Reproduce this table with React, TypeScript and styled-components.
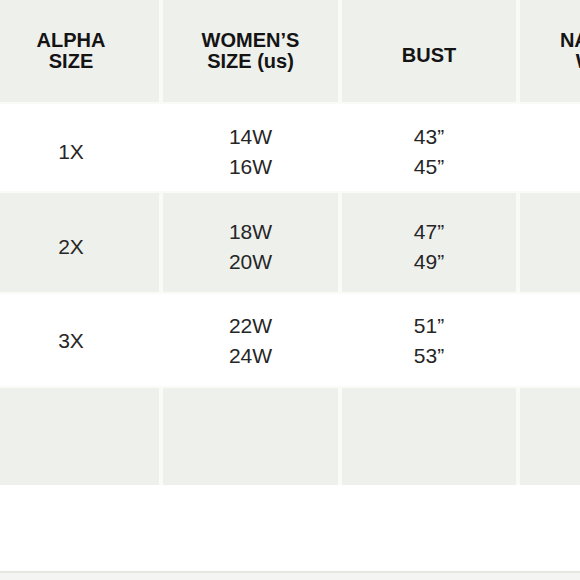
import styled, { createGlobalStyle } from "styled-components";

const GlobalStyle = createGlobalStyle`
  html, body {
    margin: 0;
    padding: 0;
    background: #ffffff;
  }
`;

const Page = styled.div`
  width: 580px;
  height: 580px;
  overflow: hidden;
  background: #fdfefc;
  font-family: "Liberation Sans", Arial, sans-serif;
  display: flex;
  flex-direction: column;
`;

const Table = styled.div`
  display: flex;
  flex-direction: column;
  row-gap: 2px;
  width: 720px;
  margin-left: -17px;
  background: #f8fbf6;
`;

const Row = styled.div<{ $height: number; $shaded: boolean }>`
  display: grid;
  grid-template-columns: 176px 175px 174px 175px;
  column-gap: 4px;
  height: ${({ $height }) => $height}px;
  background: ${({ $shaded }) => ($shaded ? "#f8fbf6" : "#ffffff")};
`;

const Cell = styled.div<{ $shaded: boolean; $offset: number }>`
  display: flex;
  flex-direction: column;
  align-items: center;
  justify-content: center;
  padding-top: ${({ $offset }) => $offset}px;
  box-sizing: border-box;
  background: ${({ $shaded }) => ($shaded ? "#eef0ec" : "transparent")};
  text-align: center;
`;

const HeadText = styled.span`
  font-size: 20px;
  font-weight: 700;
  line-height: 21px;
  color: #141414;
  white-space: nowrap;
`;

const Value = styled.span`
  font-size: 21px;
  line-height: 30px;
  color: #262626;
  white-space: nowrap;
`;

const Spacer = styled.div`
  height: 86px;
  background: #ffffff;
`;

const BottomRule = styled.div`
  height: 2px;
  background: #e4e6e2;
`;

const BottomStrip = styled.div`
  flex: 1;
  background: #f4f5f3;
`;

const headers = [
  ["ALPHA", "SIZE"],
  ["WOMEN’S", "SIZE (us)"],
  ["BUST"],
  ["NATURAL", "WAIST"],
];

type SizeRow = {
  alpha: string;
  womens: string[];
  bust: string[];
  height: number;
  shaded: boolean;
  offset: number;
};

const rows: SizeRow[] = [
  { alpha: "1X", womens: ["14W", "16W"], bust: ["43”", "45”"], height: 87, shaded: false, offset: 8 },
  { alpha: "2X", womens: ["18W", "20W"], bust: ["47”", "49”"], height: 99, shaded: true, offset: 9 },
  { alpha: "3X", womens: ["22W", "24W"], bust: ["51”", "53”"], height: 92, shaded: false, offset: 2 },
  { alpha: "", womens: [], bust: [], height: 97, shaded: true, offset: 0 },
];

function App() {
  return (
    <>
      <GlobalStyle />
      <Page>
        <Table>
          <Row $height={102} $shaded>
            {headers.map((lines, i) => (
              <Cell key={i} $shaded $offset={lines.length === 1 ? 8 : 0}>
                {lines.map((line) => (
                  <HeadText key={line}>{line}</HeadText>
                ))}
              </Cell>
            ))}
          </Row>
          {rows.map((row, i) => (
            <Row key={i} $height={row.height} $shaded={row.shaded}>
              <Cell $shaded={row.shaded} $offset={row.offset}>
                {row.alpha && <Value>{row.alpha}</Value>}
              </Cell>
              <Cell $shaded={row.shaded} $offset={row.offset}>
                {row.womens.map((v) => (
                  <Value key={v}>{v}</Value>
                ))}
              </Cell>
              <Cell $shaded={row.shaded} $offset={row.offset}>
                {row.bust.map((v) => (
                  <Value key={v}>{v}</Value>
                ))}
              </Cell>
              <Cell $shaded={row.shaded} $offset={row.offset} />
            </Row>
          ))}
        </Table>
        <Spacer />
        <BottomRule />
        <BottomStrip />
      </Page>
    </>
  );
}

export default App;
